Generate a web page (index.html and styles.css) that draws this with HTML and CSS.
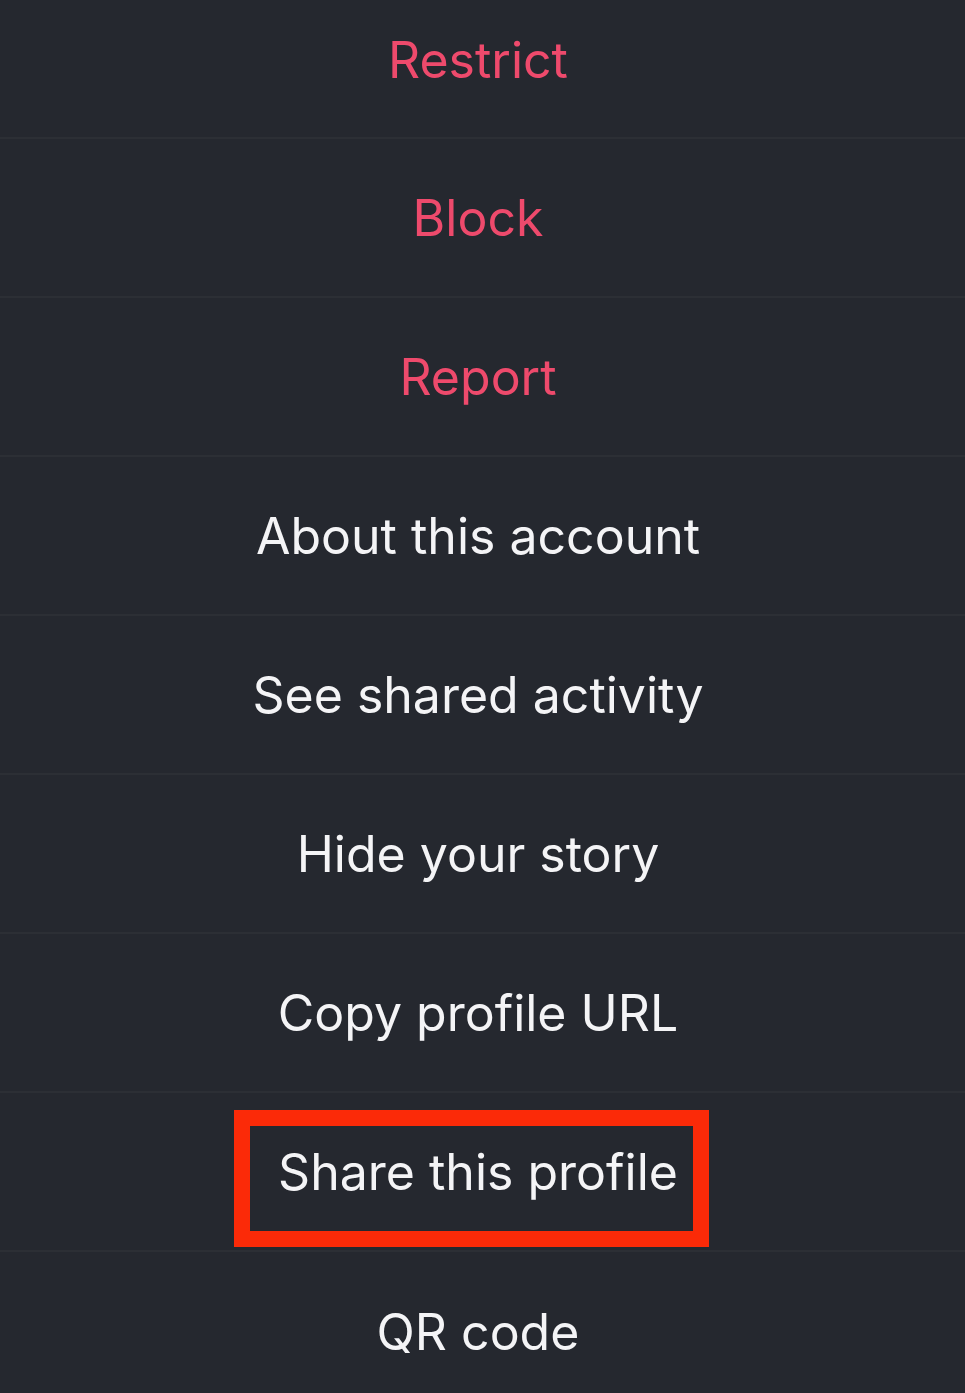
FILE: index.html
```html
<!DOCTYPE html>
<html lang="en">
<head>
    <meta charset="UTF-8">
    <meta name="viewport" content="width=device-width, initial-scale=1.0">
    <title>Profile options</title>
    <link rel="stylesheet" href="styles.css">
</head>
<body>

    <div class="sheet">
        <button class="item danger first">Restrict</button>
        <button class="item danger">Block</button>
        <button class="item danger">Report</button>
        <button class="item">About this account</button>
        <button class="item">See shared activity</button>
        <button class="item">Hide your story</button>
        <button class="item">Copy profile URL</button>
        <button class="item highlighted">
            Share this profile
            <span class="marker"></span>
        </button>
        <button class="item last">QR code</button>
    </div>

</body>
</html>
```

FILE: styles.css
```css
* {
    margin: 0;
    padding: 0;
    box-sizing: border-box;
}

body {
    font-family: Inter, "Noto Sans", sans-serif;
    background-color: #25282f;
    height: 100vh;
    overflow: hidden;
}

.sheet {
    display: flex;
    flex-direction: column;
    width: 100%;
}

.item {
    position: relative;
    display: flex;
    align-items: center;
    justify-content: center;
    height: 159px;
    padding-right: 9px;
    background: none;
    border: none;
    border-bottom: 2px solid #2c2f35;
    font-family: inherit;
    font-size: 50px;
    font-weight: 400;
    color: #f4f4f6;
    letter-spacing: 0;
}

.item.first {
    height: 139px;
    padding-bottom: 18px;
}

.item.last {
    height: 143px;
    border-bottom: none;
    padding-top: 16px;
}

.danger {
    color: #ee4a6c;
}

.marker {
    position: absolute;
    left: 234px;
    top: 17px;
    width: 475px;
    height: 137px;
    border: 16px solid #fb2a08;
}
```
